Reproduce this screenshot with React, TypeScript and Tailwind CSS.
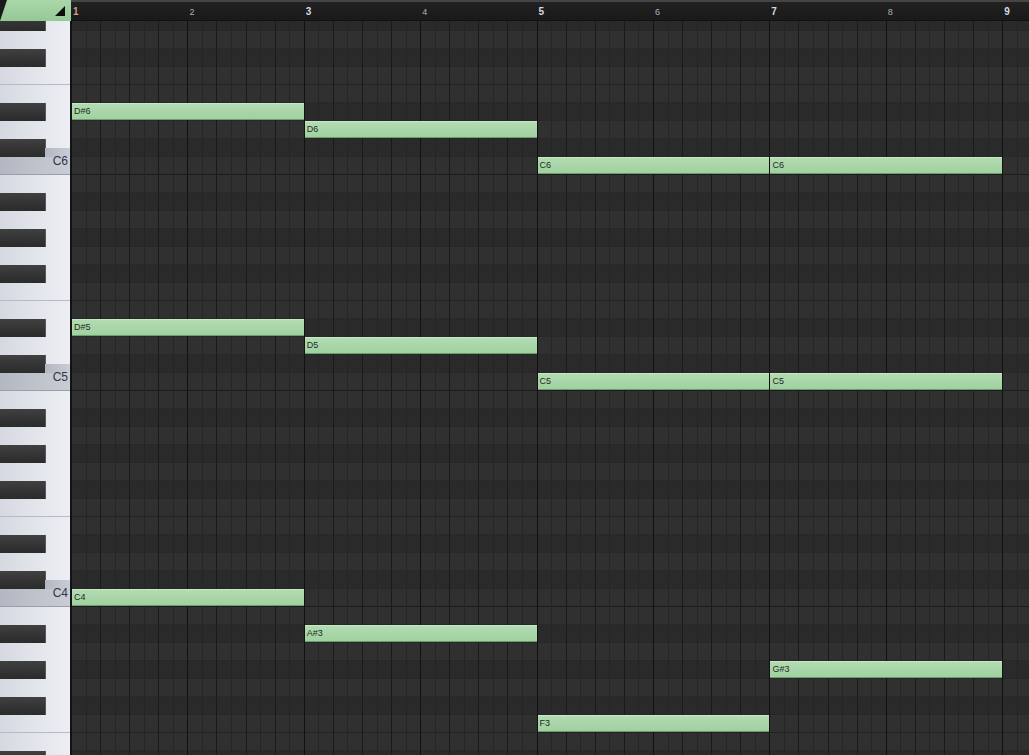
import React from "react";

const BAR = 116.4;
const ROW_H = 18;
const TOP_MIDI = 80; // G#6 is the first (partly hidden) row
const ROW_COUNT = 42;
const BLACK = [1, 3, 6, 8, 10];

type Row = { midi: number; pc: number; oct: number; black: boolean };

const rows: Row[] = Array.from({ length: ROW_COUNT }, (_, i) => {
  const midi = TOP_MIDI - i;
  const pc = midi % 12;
  return { midi, pc, oct: Math.floor(midi / 12), black: BLACK.includes(pc) };
});

type Note = { label: string; midi: number; start: number; len: number };

const notes: Note[] = [
  { label: "D#6", midi: 75, start: 0, len: 2 },
  { label: "D6", midi: 74, start: 2, len: 2 },
  { label: "C6", midi: 72, start: 4, len: 2 },
  { label: "C6", midi: 72, start: 6, len: 2 },
  { label: "D#5", midi: 63, start: 0, len: 2 },
  { label: "D5", midi: 62, start: 2, len: 2 },
  { label: "C5", midi: 60, start: 4, len: 2 },
  { label: "C5", midi: 60, start: 6, len: 2 },
  { label: "C4", midi: 48, start: 0, len: 2 },
  { label: "A#3", midi: 46, start: 2, len: 2 },
  { label: "G#3", midi: 44, start: 6, len: 2 },
  { label: "F3", midi: 41, start: 4, len: 2 },
];

function KeyRow({ row }: { row: Row }) {
  const { pc, oct, black } = row;
  const isC = pc === 0;
  const isCSharp = pc === 1;
  const divider = pc === 5 ? "border-b border-[#b6bac3]" : isC ? "border-b border-[#9a9ea8]" : "";
  return (
    <div
      className={`relative flex h-[18px] ${
        isC
          ? "bg-gradient-to-r from-[#b3b7c1] via-[#bec2cb] to-[#c9ccd4]"
          : "bg-gradient-to-r from-[#d5d8e0] via-[#e2e5eb] to-[#eceef3]"
      } ${divider}`}
    >
      {black && (
        <div className="h-full w-[45px] shrink-0 bg-gradient-to-b from-[#404040] via-[#353535] to-[#2b2b2b] shadow-[1px_0_0_#55575c]" />
      )}
      {isCSharp && (
        <div className="flex flex-1 flex-col">
          <div className="flex-1" />
          <div className="h-[9px] bg-gradient-to-r from-[#b3b7c1] to-[#c9ccd4]" />
        </div>
      )}
      {isC && (
        <span className="absolute right-[2px] top-[-2px] text-[12px] leading-[12px] text-[#2f3648]">
          C{oct}
        </span>
      )}
    </div>
  );
}

function GridRow({ row }: { row: Row }) {
  const bg = row.black ? "bg-[#2a2a2a]" : "bg-[#303030]";
  const line = row.pc === 0 ? "border-[#1b1b1b]" : row.pc === 5 ? "border-[#222222]" : "border-[#282828]";
  return <div className={`h-[18px] border-b ${bg} ${line}`} />;
}

function BarColumns() {
  return (
    <div className="absolute inset-0 flex">
      {Array.from({ length: 9 }, (_, b) => (
        <div key={b} className="flex h-full w-[116.4px] shrink-0 border-l border-[#111111]">
          {Array.from({ length: 8 }, (_, s) => (
            <div
              key={s}
              className={`h-full flex-1 ${
                s === 0 ? "" : s % 2 === 0 ? "border-l border-[#1a1a1a]" : "border-l border-[#252525]"
              }`}
            />
          ))}
        </div>
      ))}
    </div>
  );
}

function Ruler() {
  return (
    <div className="flex h-full flex-1 overflow-hidden border-t-2 border-b border-t-[#454545] border-b-[#111111] bg-gradient-to-b from-[#222222] to-[#191919]">
      {Array.from({ length: 9 }, (_, b) => {
        const n = b + 1;
        const major = n % 2 === 1;
        return (
          <div key={b} className="flex h-full w-[116.4px] shrink-0 items-center pl-[2px] pt-[2px]">
            <span
              className={
                n === 1
                  ? "text-[10px] font-bold leading-none text-[#d89a8a]"
                  : major
                  ? "text-[10px] font-bold leading-none text-[#d3dae2]"
                  : "text-[9px] leading-none text-[#aab2ba]"
              }
            >
              {n}
            </span>
          </div>
        );
      })}
    </div>
  );
}

function CornerTab() {
  return (
    <div className="relative h-full w-[71px] shrink-0 bg-gradient-to-b from-[#a9d7a9] to-[#96c896] [clip-path:polygon(7px_0,100%_0,100%_100%,0_100%)]">
      <svg className="absolute right-[6px] top-[6px]" width="10" height="10" viewBox="0 0 10 10">
        <polygon points="10,0 10,10 0,10" fill="#0c0c0c" />
      </svg>
    </div>
  );
}

export default function App() {
  return (
    <div className="flex h-[755px] w-[1029px] flex-col overflow-hidden bg-[#1a1a1a] font-['Liberation_Sans',Arial,sans-serif]">
      <div className="flex h-[21px] shrink-0">
        <CornerTab />
        <Ruler />
      </div>
      <div className="flex min-h-0 flex-1">
        <div className="w-[70px] shrink-0 overflow-hidden">
          <div className="-mt-[8px]">
            {rows.map((r) => (
              <KeyRow key={r.midi} row={r} />
            ))}
          </div>
        </div>
        <div className="w-px shrink-0 bg-[#141414]" />
        <div className="relative flex-1 overflow-hidden">
          <div className="relative -mt-[8px]">
            {rows.map((r) => (
              <GridRow key={r.midi} row={r} />
            ))}
            <BarColumns />
            {notes.map((n, i) => (
              <div
                key={i}
                className="absolute flex h-[17px] items-center border-t border-b border-t-[#c6e8c6] border-b-[#6f9c6f] bg-gradient-to-b from-[#b2dcb2] to-[#a0d0a0] pl-[2px] text-[9px] leading-none text-[#1d2b1d]"
                style={{
                  top: (TOP_MIDI - n.midi) * ROW_H,
                  left: n.start * BAR + 1,
                  width: n.len * BAR - 1,
                }}
              >
                {n.label}
              </div>
            ))}
          </div>
        </div>
      </div>
    </div>
  );
}
